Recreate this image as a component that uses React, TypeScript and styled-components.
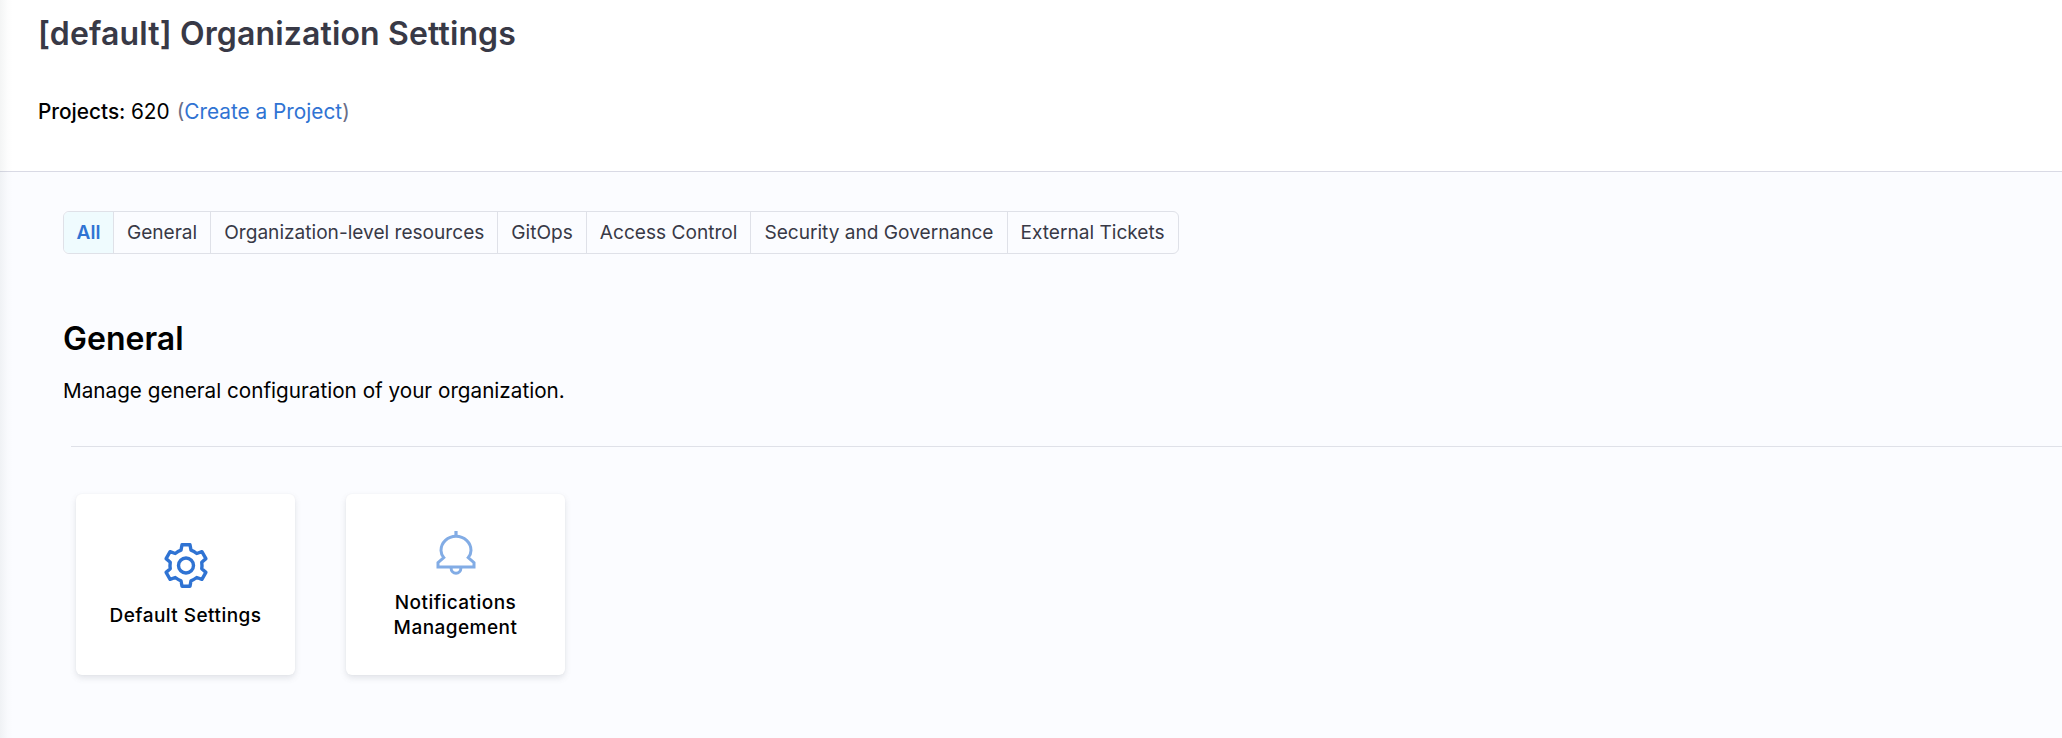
import React from 'react';
import styled, { createGlobalStyle } from 'styled-components';

const GlobalStyle = createGlobalStyle`
  * { box-sizing: border-box; }
  body {
    margin: 0;
    background: #fbfcff;
    font-family: Inter, 'Liberation Sans', sans-serif;
    color: #000;
  }
`;

const Page = styled.div`
  position: relative;
  height: 738px;
  overflow: hidden;
  background: #fbfcff;
`;

const EdgeShade = styled.div`
  position: absolute;
  inset: 0 auto 0 0;
  width: 13px;
  background: linear-gradient(to right, rgba(60, 80, 80, 0.06), rgba(60, 80, 80, 0.012) 60%, rgba(60, 80, 80, 0));
`;

const Header = styled.header`
  height: 172px;
  padding: 14px 0 0 38px;
  background: #fff;
  border-bottom: 1px solid #d9dae5;
`;

const Title = styled.h1`
  margin: 0;
  font-size: 32px;
  line-height: 40px;
  font-weight: 600;
  letter-spacing: 0.14px;
  color: #383946;
`;

const Projects = styled.div`
  display: flex;
  margin-top: 43px;
  font-size: 20.8px;
  line-height: 30px;
  white-space: pre;
`;

const ProjectsLabel = styled.span`
  font-weight: 500;
`;

const CreateWrap = styled.span`
  margin-left: 7px;
  color: #6b6d85;
`;

const CreateLink = styled.a`
  color: #2f73d3;
`;

const Main = styled.main`
  padding: 39px 0 0 63px;
`;

const Tabs = styled.nav`
  display: flex;
  width: fit-content;
  height: 43px;
  border: 1px solid #dfe1e8;
  border-radius: 6px;
  overflow: hidden;
`;

const Tab = styled.button<{ $active?: boolean }>`
  padding: 0 ${(p) => (p.$active ? 12.5 : 13)}px;
  border: 0;
  border-right: 1px solid #dfe1e8;
  background: ${(p) => (p.$active ? '#effbfe' : 'transparent')};
  color: ${(p) => (p.$active ? '#2f73d3' : '#383946')};
  font: ${(p) => (p.$active ? 600 : 400)} 19.1px/41px Inter, sans-serif;
  white-space: nowrap;
  &:last-child { border-right: 0; }
`;

const SectionTitle = styled.h2`
  margin: 65px 0 0;
  font-size: 32px;
  line-height: 40px;
  font-weight: 600;
`;

const SectionText = styled.p`
  margin: 17px 0 0;
  font-size: 20.7px;
  line-height: 30px;
`;

const Divider = styled.hr`
  height: 1px;
  margin: 40px 0 0 8px;
  border: 0;
  background: #dfe1e8;
`;

const Cards = styled.div`
  display: flex;
  gap: 51px;
  padding: 47px 0 0 13px;
`;

const Card = styled.article`
  display: flex;
  flex-direction: column;
  align-items: center;
  justify-content: center;
  width: 219px;
  height: 181px;
  border-radius: 6px;
  background: #fff;
  box-shadow: 0 3px 6px rgba(96, 97, 112, 0.16), 0 0 2px rgba(40, 41, 61, 0.04);
`;

const CardLabel = styled.div`
  margin-top: 15px;
  font-size: 19px;
  line-height: 25px;
  font-weight: 500;
  letter-spacing: 0.46px;
  text-align: center;
  white-space: pre-line;
`;

const GearIcon = () => (
  <svg width="46" height="46" viewBox="-23 -23.5 46 46" fill="none" stroke="#2f73d3" strokeWidth="3.4" strokeLinejoin="round">
    <path d="M-4-20.7H4L5-15.3Q8-14.1 10.75-12L15.9-13.8L19.9-6.9L15.75-3.3Q16.2 0 15.75 3.3L19.9 6.9L15.9 13.8L10.75 12Q8 14.1 5 15.3L4 20.7H-4L-5 15.3Q-8 14.1-10.75 12L-15.9 13.8L-19.9 6.9L-15.75 3.3Q-16.2 0-15.75-3.3L-19.9-6.9L-15.9-13.8L-10.75-12Q-8-14.1-5-15.3Z" />
    <circle r="7.5" />
  </svg>
);

const BellIcon = () => (
  <svg width="46" height="46" viewBox="0 -1 46 46" fill="none" stroke="#82ace5" strokeWidth="3">
    <path d="M23 1V6" strokeWidth="3.2" />
    <path d="M10.8 27.6C8.8 25 8 23 8 20.4a15 14.2 0 0 1 30 0C38 23 37.2 25 35.2 27.6L41 32.6V37H5V32.6Z" />
    <path d="M18.1 38a4.9 5.3 0 0 0 9.8 0" />
  </svg>
);

const tabs = ['All', 'General', 'Organization-level resources', 'GitOps', 'Access Control', 'Security and Governance', 'External Tickets'];

export default function App() {
  return (
    <>
      <GlobalStyle />
      <Page>
        <Header>
          <Title>[default] Organization Settings</Title>
          <Projects>
            <ProjectsLabel>Projects: </ProjectsLabel>
            <span>620</span>
            <CreateWrap>(<CreateLink>Create a Project</CreateLink>)</CreateWrap>
          </Projects>
        </Header>
        <Main>
          <Tabs>
            {tabs.map((name, i) => (
              <Tab key={name} $active={i === 0}>{name}</Tab>
            ))}
          </Tabs>
          <SectionTitle>General</SectionTitle>
          <SectionText>Manage general configuration of your organization.</SectionText>
          <Divider />
          <Cards>
            <Card>
              <GearIcon />
              <CardLabel>Default Settings</CardLabel>
            </Card>
            <Card>
              <BellIcon />
              <CardLabel>{'Notifications\nManagement'}</CardLabel>
            </Card>
          </Cards>
        </Main>
        <EdgeShade />
      </Page>
    </>
  );
}
